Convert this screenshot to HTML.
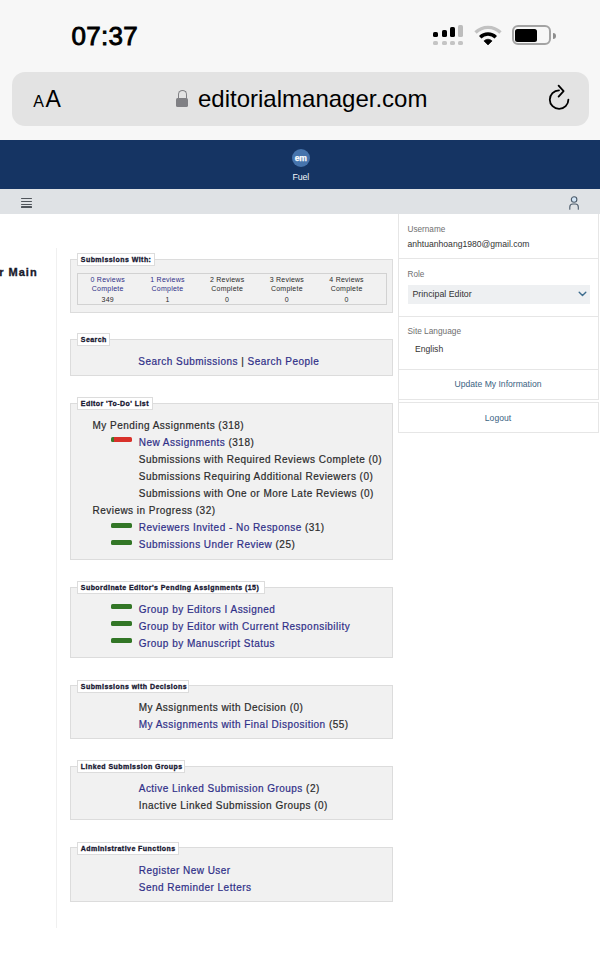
<!DOCTYPE html>
<html><head><meta charset="utf-8"><title>Editorial Manager</title>
<style>
html,body{margin:0;padding:0;width:600px;height:963px;overflow:hidden;background:#fff;}
body{position:relative;font-family:"Liberation Sans",sans-serif;}
.t{position:absolute;white-space:pre;}
.r{position:absolute;}
</style></head><body>
<div class="r" style="left:0px;top:0px;width:600px;height:140px;background:#f7f7f7;"></div>
<div class="t" style="left:71.5px;top:23px;font-size:26px;line-height:26px;font-weight:400;color:#000;letter-spacing:0.3px;-webkit-text-stroke:0.9px #000;">07:37</div>
<div class="r" style="left:433px;top:31.7px;width:5px;height:5.300000000000001px;background:#000;border-radius:1.6px;"></div>
<div class="r" style="left:433px;top:40.6px;width:5px;height:4.8px;background:#c4c4c4;border-radius:1.6px;"></div>
<div class="r" style="left:441.7px;top:29.7px;width:5px;height:7.300000000000001px;background:#000;border-radius:1.6px;"></div>
<div class="r" style="left:441.7px;top:40.6px;width:5px;height:4.8px;background:#c4c4c4;border-radius:1.6px;"></div>
<div class="r" style="left:450px;top:27.3px;width:5px;height:9.7px;background:#000;border-radius:1.6px;"></div>
<div class="r" style="left:450px;top:40.6px;width:5px;height:4.8px;background:#c4c4c4;border-radius:1.6px;"></div>
<div class="r" style="left:458.3px;top:25px;width:5px;height:12px;background:#bdbdbd;border-radius:1.6px;"></div>
<div class="r" style="left:458.3px;top:40.6px;width:5px;height:4.8px;background:#c4c4c4;border-radius:1.6px;"></div>
<svg class="r" style="left:472.7px;top:24px" width="30" height="22" viewBox="0 0 30 22">
<path d="M1.35 7.35 A19.3 19.3 0 0 1 28.65 7.35 L26.31 9.69 A16 16 0 0 0 3.69 9.69 Z" fill="#c2c2c2"/>
<path d="M6.02 12.02 A12.7 12.7 0 0 1 23.98 12.02 L21.58 14.42 A9.3 9.3 0 0 0 8.42 14.42 Z" fill="#000"/>
<path d="M15 21 L10.9 16.9 A5.8 5.8 0 0 1 19.1 16.9 Z" fill="#000" stroke="#000" stroke-width="0.6" stroke-linejoin="round"/>
</svg>
<div class="r" style="left:512px;top:25px;width:39px;height:20px;box-sizing:border-box;border:2px solid #a3a3a3;border-radius:6px;"></div>
<div class="r" style="left:514.8px;top:28.8px;width:22.4px;height:13.2px;background:#000;border-radius:2.5px;"></div>
<div class="r" style="left:553px;top:32.5px;width:2.8px;height:6.5px;background:#8e8e8e;border-radius:0 3.5px 3.5px 0;"></div>
<div class="r" style="left:12px;top:72px;width:577px;height:54px;background:#e3e3e3;border-radius:13px;"></div>
<div class="t" style="left:33.2px;top:94px;font-size:16px;line-height:16px;font-weight:400;color:#000;">A</div>
<div class="t" style="left:45.6px;top:88px;font-size:23px;line-height:23px;font-weight:400;color:#000;">A</div>
<div class="r" style="left:177.6px;top:90px;width:9.3px;height:10px;box-sizing:border-box;border:1.8px solid #808084;border-bottom:none;border-radius:4.6px 4.6px 0 0;"></div>
<div class="r" style="left:176px;top:97.9px;width:12.1px;height:9.3px;background:#808084;border-radius:1.6px;"></div>
<div class="t" style="left:198px;top:87px;font-size:24px;line-height:24px;font-weight:400;color:#000;">editorialmanager.com</div>
<svg class="r" style="left:545px;top:82px" width="28" height="32" viewBox="0 0 28 32">
<path d="M14 8.3 A9.3 9.3 0 1 0 23.4 17.6" fill="none" stroke="#000" stroke-width="1.8" stroke-linecap="round"/>
<path d="M13.6 3.6 L18.6 9.2 L13.6 14.6" fill="none" stroke="#000" stroke-width="1.8" stroke-linecap="round" stroke-linejoin="round"/>
</svg>
<div class="r" style="left:0px;top:140px;width:600px;height:49px;background:#153463;"></div>
<div class="r" style="left:291.5px;top:149px;width:18px;height:18px;background:#4674ad;border-radius:50%;"></div>
<div class="t" style="left:291.6px;top:154px;font-size:8.6px;line-height:8.6px;font-weight:700;color:#fff;letter-spacing:-0.35px;width:18px;text-align:center;-webkit-text-stroke:0.25px #fff;">em</div>
<div class="t" style="left:292.6px;top:173px;font-size:8.8px;line-height:8.8px;font-weight:400;color:#f4f6fa;letter-spacing:-0.15px;">Fuel</div>
<div class="r" style="left:0px;top:189px;width:600px;height:25px;background:#dfe2e5;"></div>
<div class="r" style="left:21.3px;top:197.9px;width:11px;height:1.3px;background:#50555b;border-radius:0.6px;"></div>
<div class="r" style="left:21.3px;top:200.8px;width:11px;height:1.3px;background:#50555b;border-radius:0.6px;"></div>
<div class="r" style="left:21.3px;top:203.6px;width:11px;height:1.3px;background:#50555b;border-radius:0.6px;"></div>
<div class="r" style="left:21.3px;top:206.3px;width:11px;height:1.3px;background:#50555b;border-radius:0.6px;"></div>
<svg class="r" style="left:566px;top:193px" width="16" height="18" viewBox="0 0 16 18">
<circle cx="8.1" cy="6.5" r="2.75" fill="#d3e6f7" stroke="#4b5a6a" stroke-width="1.1"/>
<path d="M3.8 16.2 L3.8 14 Q3.8 11 6.8 11 L9.3 11 Q12.3 11 12.3 14 L12.3 16.2" fill="none" stroke="#4b5a6a" stroke-width="1.1" stroke-linecap="round"/>
</svg>
<div class="r" style="left:56px;top:248px;width:1px;height:680px;background:#f0f0f0;"></div>
<div class="t" style="left:-0.8px;top:267px;font-size:11px;line-height:11px;font-weight:700;color:#1a1a2a;letter-spacing:1.0px;-webkit-text-stroke:0.35px currentColor;">r Main</div>
<div class="r" style="left:70px;top:259px;width:323px;height:54px;box-sizing:border-box;background:#f1f1f1;border:1px solid #dcdcdc;"></div>
<div class="r" style="left:77px;top:253px;width:78px;height:13px;box-sizing:border-box;background:#fff;border:1px solid #dcdcdc;"></div>
<div class="t" style="left:80.8px;top:256px;font-size:7px;line-height:7px;font-weight:700;color:#161630;letter-spacing:0.45px;-webkit-text-stroke:0.3px currentColor;">Submissions With:</div>
<div class="r" style="left:77px;top:273px;width:310px;height:32px;box-sizing:border-box;border:1px solid #d2d2d2;"></div>
<div class="t" style="left:77.75px;top:276px;font-size:7px;line-height:7px;font-weight:400;color:#2f2f88;letter-spacing:0.24px;width:60px;text-align:center;">0 Reviews</div>
<div class="t" style="left:77.75px;top:285px;font-size:7px;line-height:7px;font-weight:400;color:#2f2f88;letter-spacing:0.24px;width:60px;text-align:center;">Complete</div>
<div class="t" style="left:77.75px;top:296px;font-size:7px;line-height:7px;font-weight:400;color:#2b2b2b;letter-spacing:0.24px;width:60px;text-align:center;">349</div>
<div class="t" style="left:137.5px;top:276px;font-size:7px;line-height:7px;font-weight:400;color:#2f2f88;letter-spacing:0.24px;width:60px;text-align:center;">1 Reviews</div>
<div class="t" style="left:137.5px;top:285px;font-size:7px;line-height:7px;font-weight:400;color:#2f2f88;letter-spacing:0.24px;width:60px;text-align:center;">Complete</div>
<div class="t" style="left:137.5px;top:296px;font-size:7px;line-height:7px;font-weight:400;color:#2b2b2b;letter-spacing:0.24px;width:60px;text-align:center;">1</div>
<div class="t" style="left:197.2px;top:276px;font-size:7px;line-height:7px;font-weight:400;color:#2b2b2b;letter-spacing:0.24px;width:60px;text-align:center;">2 Reviews</div>
<div class="t" style="left:197.2px;top:285px;font-size:7px;line-height:7px;font-weight:400;color:#2b2b2b;letter-spacing:0.24px;width:60px;text-align:center;">Complete</div>
<div class="t" style="left:197.2px;top:296px;font-size:7px;line-height:7px;font-weight:400;color:#2b2b2b;letter-spacing:0.24px;width:60px;text-align:center;">0</div>
<div class="t" style="left:256.9px;top:276px;font-size:7px;line-height:7px;font-weight:400;color:#2b2b2b;letter-spacing:0.24px;width:60px;text-align:center;">3 Reviews</div>
<div class="t" style="left:256.9px;top:285px;font-size:7px;line-height:7px;font-weight:400;color:#2b2b2b;letter-spacing:0.24px;width:60px;text-align:center;">Complete</div>
<div class="t" style="left:256.9px;top:296px;font-size:7px;line-height:7px;font-weight:400;color:#2b2b2b;letter-spacing:0.24px;width:60px;text-align:center;">0</div>
<div class="t" style="left:316.6px;top:276px;font-size:7px;line-height:7px;font-weight:400;color:#2b2b2b;letter-spacing:0.24px;width:60px;text-align:center;">4 Reviews</div>
<div class="t" style="left:316.6px;top:285px;font-size:7px;line-height:7px;font-weight:400;color:#2b2b2b;letter-spacing:0.24px;width:60px;text-align:center;">Complete</div>
<div class="t" style="left:316.6px;top:296px;font-size:7px;line-height:7px;font-weight:400;color:#2b2b2b;letter-spacing:0.24px;width:60px;text-align:center;">0</div>
<div class="r" style="left:70px;top:339px;width:323px;height:37px;box-sizing:border-box;background:#f1f1f1;border:1px solid #dcdcdc;"></div>
<div class="r" style="left:77px;top:333px;width:33.3px;height:13px;box-sizing:border-box;background:#fff;border:1px solid #dcdcdc;"></div>
<div class="t" style="left:80.8px;top:336px;font-size:7px;line-height:7px;font-weight:700;color:#161630;letter-spacing:0.45px;-webkit-text-stroke:0.3px currentColor;">Search</div>
<div class="t" style="left:138.3px;top:357px;font-size:10px;line-height:10px;font-weight:400;color:#2b2b2b;letter-spacing:0.47px;-webkit-text-stroke:0.2px currentColor;"><span style="color:#2f2f88">Search Submissions</span> | <span style="color:#2f2f88">Search People</span></div>
<div class="r" style="left:70px;top:403px;width:323px;height:157px;box-sizing:border-box;background:#f1f1f1;border:1px solid #dcdcdc;"></div>
<div class="r" style="left:77px;top:397px;width:75.5px;height:13px;box-sizing:border-box;background:#fff;border:1px solid #dcdcdc;"></div>
<div class="t" style="left:80.8px;top:400px;font-size:7px;line-height:7px;font-weight:700;color:#161630;letter-spacing:0.45px;-webkit-text-stroke:0.3px currentColor;">Editor 'To-Do' List</div>
<div class="t" style="left:92.5px;top:421px;font-size:10px;line-height:10px;font-weight:400;color:#2b2b2b;letter-spacing:0.47px;-webkit-text-stroke:0.2px currentColor;">My Pending Assignments (318)</div>
<div class="r" style="left:110.8px;top:437px;width:21px;height:5.3px;background:linear-gradient(90deg,#3f7a2c 0,#3f7a2c 2.8px,#d8312a 2.8px);border-radius:1.6px;"></div>
<div class="t" style="left:138.75px;top:438px;font-size:10px;line-height:10px;font-weight:400;color:#2b2b2b;letter-spacing:0.47px;-webkit-text-stroke:0.2px currentColor;"><span style="color:#2f2f88">New Assignments</span> (318)</div>
<div class="t" style="left:138.75px;top:455px;font-size:10px;line-height:10px;font-weight:400;color:#2b2b2b;letter-spacing:0.47px;-webkit-text-stroke:0.2px currentColor;">Submissions with Required Reviews Complete (0)</div>
<div class="t" style="left:138.75px;top:472px;font-size:10px;line-height:10px;font-weight:400;color:#2b2b2b;letter-spacing:0.47px;-webkit-text-stroke:0.2px currentColor;">Submissions Requiring Additional Reviewers (0)</div>
<div class="t" style="left:138.75px;top:489px;font-size:10px;line-height:10px;font-weight:400;color:#2b2b2b;letter-spacing:0.47px;-webkit-text-stroke:0.2px currentColor;">Submissions with One or More Late Reviews (0)</div>
<div class="t" style="left:92.5px;top:506px;font-size:10px;line-height:10px;font-weight:400;color:#2b2b2b;letter-spacing:0.47px;-webkit-text-stroke:0.2px currentColor;">Reviews in Progress (32)</div>
<div class="r" style="left:110.8px;top:522.6px;width:21px;height:5.3px;background:#327626;border-radius:1.6px;"></div>
<div class="t" style="left:138.75px;top:523px;font-size:10px;line-height:10px;font-weight:400;color:#2b2b2b;letter-spacing:0.47px;-webkit-text-stroke:0.2px currentColor;"><span style="color:#2f2f88">Reviewers Invited - No Response</span> (31)</div>
<div class="r" style="left:110.8px;top:539.7px;width:21px;height:5.3px;background:#327626;border-radius:1.6px;"></div>
<div class="t" style="left:138.75px;top:540px;font-size:10px;line-height:10px;font-weight:400;color:#2b2b2b;letter-spacing:0.47px;-webkit-text-stroke:0.2px currentColor;"><span style="color:#2f2f88">Submissions Under Review</span> (25)</div>
<div class="r" style="left:70px;top:587px;width:323px;height:71px;box-sizing:border-box;background:#f1f1f1;border:1px solid #dcdcdc;"></div>
<div class="r" style="left:77px;top:581px;width:187.5px;height:13px;box-sizing:border-box;background:#fff;border:1px solid #dcdcdc;"></div>
<div class="t" style="left:80.8px;top:584px;font-size:7px;line-height:7px;font-weight:700;color:#161630;letter-spacing:0.45px;-webkit-text-stroke:0.3px currentColor;">Subordinate Editor's Pending Assignments (15)</div>
<div class="r" style="left:110.8px;top:604px;width:21px;height:5.3px;background:#327626;border-radius:1.6px;"></div>
<div class="t" style="left:138.75px;top:605px;font-size:10px;line-height:10px;font-weight:400;color:#2b2b2b;letter-spacing:0.47px;-webkit-text-stroke:0.2px currentColor;"><span style="color:#2f2f88">Group by Editors I Assigned</span></div>
<div class="r" style="left:110.8px;top:621px;width:21px;height:5.3px;background:#327626;border-radius:1.6px;"></div>
<div class="t" style="left:138.75px;top:622px;font-size:10px;line-height:10px;font-weight:400;color:#2b2b2b;letter-spacing:0.47px;-webkit-text-stroke:0.2px currentColor;"><span style="color:#2f2f88">Group by Editor with Current Responsibility</span></div>
<div class="r" style="left:110.8px;top:638px;width:21px;height:5.3px;background:#327626;border-radius:1.6px;"></div>
<div class="t" style="left:138.75px;top:639px;font-size:10px;line-height:10px;font-weight:400;color:#2b2b2b;letter-spacing:0.47px;-webkit-text-stroke:0.2px currentColor;"><span style="color:#2f2f88">Group by Manuscript Status</span></div>
<div class="r" style="left:70px;top:685px;width:323px;height:54px;box-sizing:border-box;background:#f1f1f1;border:1px solid #dcdcdc;"></div>
<div class="r" style="left:77px;top:680px;width:111.75px;height:13px;box-sizing:border-box;background:#fff;border:1px solid #dcdcdc;"></div>
<div class="t" style="left:80.8px;top:683px;font-size:7px;line-height:7px;font-weight:700;color:#161630;letter-spacing:0.45px;-webkit-text-stroke:0.3px currentColor;">Submissions with Decisions</div>
<div class="t" style="left:138.75px;top:703px;font-size:10px;line-height:10px;font-weight:400;color:#2b2b2b;letter-spacing:0.47px;-webkit-text-stroke:0.2px currentColor;">My Assignments with Decision (0)</div>
<div class="t" style="left:138.75px;top:720px;font-size:10px;line-height:10px;font-weight:400;color:#2b2b2b;letter-spacing:0.47px;-webkit-text-stroke:0.2px currentColor;"><span style="color:#2f2f88">My Assignments with Final Disposition</span> (55)</div>
<div class="r" style="left:70px;top:766px;width:323px;height:54px;box-sizing:border-box;background:#f1f1f1;border:1px solid #dcdcdc;"></div>
<div class="r" style="left:77px;top:760px;width:107.5px;height:13px;box-sizing:border-box;background:#fff;border:1px solid #dcdcdc;"></div>
<div class="t" style="left:80.8px;top:763px;font-size:7px;line-height:7px;font-weight:700;color:#161630;letter-spacing:0.45px;-webkit-text-stroke:0.3px currentColor;">Linked Submission Groups</div>
<div class="t" style="left:138.75px;top:784px;font-size:10px;line-height:10px;font-weight:400;color:#2b2b2b;letter-spacing:0.47px;-webkit-text-stroke:0.2px currentColor;"><span style="color:#2f2f88">Active Linked Submission Groups</span> (2)</div>
<div class="t" style="left:138.75px;top:801px;font-size:10px;line-height:10px;font-weight:400;color:#2b2b2b;letter-spacing:0.47px;-webkit-text-stroke:0.2px currentColor;">Inactive Linked Submission Groups (0)</div>
<div class="r" style="left:70px;top:847px;width:323px;height:55px;box-sizing:border-box;background:#f1f1f1;border:1px solid #dcdcdc;"></div>
<div class="r" style="left:77px;top:842px;width:102.30000000000001px;height:13px;box-sizing:border-box;background:#fff;border:1px solid #dcdcdc;"></div>
<div class="t" style="left:80.8px;top:845px;font-size:7px;line-height:7px;font-weight:700;color:#161630;letter-spacing:0.45px;-webkit-text-stroke:0.3px currentColor;">Administrative Functions</div>
<div class="t" style="left:138.75px;top:866px;font-size:10px;line-height:10px;font-weight:400;color:#2b2b2b;letter-spacing:0.47px;-webkit-text-stroke:0.2px currentColor;"><span style="color:#2f2f88">Register New User</span></div>
<div class="t" style="left:138.75px;top:883px;font-size:10px;line-height:10px;font-weight:400;color:#2b2b2b;letter-spacing:0.47px;-webkit-text-stroke:0.2px currentColor;"><span style="color:#2f2f88">Send Reminder Letters</span></div>
<div class="r" style="left:397.5px;top:214px;width:201px;height:185.5px;box-sizing:border-box;background:#fff;border:1px solid #e6e6e6;border-top:none;"></div>
<div class="r" style="left:397.5px;top:258px;width:201px;height:1px;background:#e6e6e6;"></div>
<div class="r" style="left:397.5px;top:316px;width:201px;height:1px;background:#e6e6e6;"></div>
<div class="r" style="left:397.5px;top:369px;width:201px;height:1px;background:#e6e6e6;"></div>
<div class="t" style="left:407.5px;top:226px;font-size:8.2px;line-height:8.2px;font-weight:400;color:#6f6f6f;">Username</div>
<div class="t" style="left:407.5px;top:240px;font-size:8.6px;line-height:8.6px;font-weight:400;color:#333;">anhtuanhoang1980@gmail.com</div>
<div class="t" style="left:407.5px;top:271px;font-size:8.2px;line-height:8.2px;font-weight:400;color:#6f6f6f;">Role</div>
<div class="r" style="left:408px;top:285px;width:182px;height:19px;background:#eef0f2;"></div>
<div class="t" style="left:412.5px;top:290px;font-size:8.8px;line-height:8.8px;font-weight:400;color:#333;">Principal Editor</div>
<svg class="r" style="left:578px;top:290px" width="9" height="8" viewBox="0 0 9 8">
<path d="M1.2 2.2 L4.5 5.5 L7.8 2.2" fill="none" stroke="#3e6d8e" stroke-width="1.4" stroke-linecap="round" stroke-linejoin="round"/>
</svg>
<div class="t" style="left:407.5px;top:327px;font-size:8.3px;line-height:8.3px;font-weight:400;color:#6f6f6f;">Site Language</div>
<div class="t" style="left:415px;top:345px;font-size:8.6px;line-height:8.6px;font-weight:400;color:#333;">English</div>
<div class="t" style="left:397.5px;top:380px;font-size:8.6px;line-height:8.6px;font-weight:400;color:#3b6383;width:201px;text-align:center;">Update My Information</div>
<div class="r" style="left:397.5px;top:402px;width:201px;height:31px;box-sizing:border-box;background:#fff;border:1px solid #e6e6e6;"></div>
<div class="t" style="left:397.5px;top:414px;font-size:8.6px;line-height:8.6px;font-weight:400;color:#3b6383;width:201px;text-align:center;">Logout</div>
<div class="r" style="left:397.5px;top:399px;width:1px;height:4px;background:#e6e6e6;"></div>
</body></html>
